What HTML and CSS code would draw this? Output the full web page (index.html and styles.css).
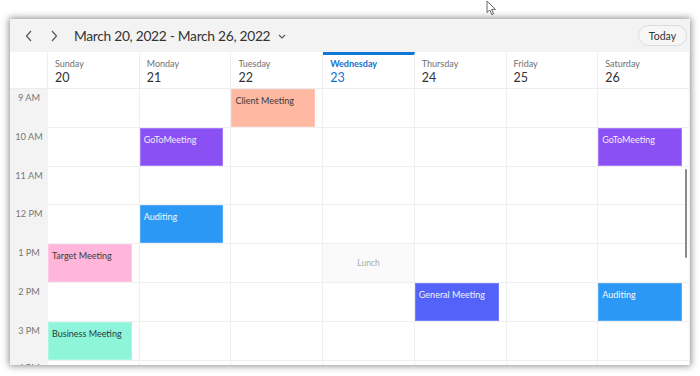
FILE: index.html
```html
<!DOCTYPE html>
<html>
<head>
<meta charset="utf-8">
<link rel="stylesheet" href="styles.css">
</head>
<body>
<svg class="cursor" width="12" height="16" viewBox="0 0 12 16"><path d="M1 1 L1 12.5 L3.8 10 L5.8 14.6 L7.6 13.8 L5.7 9.4 L9.4 9.4 Z" fill="#fff" stroke="#555" stroke-width="0.9" stroke-linejoin="round"/></svg>
<div class="window">
  <div class="toolbar">
    <div class="nav">
      <svg class="arrow" width="8" height="12" viewBox="0 0 8 12"><path d="M6 1 L1.5 6 L6 11" fill="none" stroke="#555" stroke-width="1.2"/></svg>
      <svg class="arrow" width="8" height="12" viewBox="0 0 8 12"><path d="M2 1 L6.5 6 L2 11" fill="none" stroke="#555" stroke-width="1.2"/></svg>
    </div>
    <div class="title">March 20, 2022 - March 26, 2022</div>
    <svg class="dropdown" width="8" height="5" viewBox="0 0 8 5"><path d="M1 1 L4 4 L7 1" fill="none" stroke="#555" stroke-width="1.1"/></svg>
    <div class="spacer"></div>
    <div class="today">Today</div>
  </div>
  <div class="days">
    <div class="dh corner"></div>
    <div class="dh"><span class="dn">Sunday</span><span class="dd">20</span></div>
    <div class="dh"><span class="dn">Monday</span><span class="dd">21</span></div>
    <div class="dh"><span class="dn">Tuesday</span><span class="dd">22</span></div>
    <div class="dh current"><span class="dn">Wednesday</span><span class="dd">23</span></div>
    <div class="dh"><span class="dn">Thursday</span><span class="dd">24</span></div>
    <div class="dh"><span class="dn">Friday</span><span class="dd">25</span></div>
    <div class="dh"><span class="dn">Saturday</span><span class="dd">26</span></div>
  </div>
  <div class="grid">
    <div class="tl">9 AM</div>
    <div class="c"></div><div class="c"></div><div class="c"><div class="ev salmon">Client Meeting</div></div><div class="c"></div><div class="c"></div><div class="c"></div><div class="c"></div>
    <div class="tl">10 AM</div>
    <div class="c"></div><div class="c"><div class="ev purple">GoToMeeting</div></div><div class="c"></div><div class="c"></div><div class="c"></div><div class="c"></div><div class="c"><div class="ev purple">GoToMeeting</div></div>
    <div class="tl">11 AM</div>
    <div class="c"></div><div class="c"></div><div class="c"></div><div class="c"></div><div class="c"></div><div class="c"></div><div class="c"></div>
    <div class="tl">12 PM</div>
    <div class="c"></div><div class="c"><div class="ev blue">Auditing</div></div><div class="c"></div><div class="c"></div><div class="c"></div><div class="c"></div><div class="c"></div>
    <div class="tl">1 PM</div>
    <div class="c"><div class="ev pink">Target Meeting</div></div><div class="c"></div><div class="c"></div><div class="c lunch">Lunch</div><div class="c"></div><div class="c"></div><div class="c"></div>
    <div class="tl">2 PM</div>
    <div class="c"></div><div class="c"></div><div class="c"></div><div class="c"></div><div class="c"><div class="ev indigo">General Meeting</div></div><div class="c"></div><div class="c"><div class="ev blue">Auditing</div></div>
    <div class="tl">3 PM</div>
    <div class="c"><div class="ev mint">Business Meeting</div></div><div class="c"></div><div class="c"></div><div class="c"></div><div class="c"></div><div class="c"></div><div class="c"></div>
    <div class="tl last">4 PM</div>
    <div class="c"></div><div class="c"></div><div class="c"></div><div class="c"></div><div class="c"></div><div class="c"></div><div class="c"></div>
  </div>
  <div class="scrollbar"></div>
</div>
</body>
</html>
```

FILE: styles.css
```css
html, body {
  margin: 0;
  padding: 0;
  background: #ffffff;
  font-family: Lato, "Open Sans", sans-serif;
}
body {
  position: relative;
  width: 700px;
  height: 376px;
  overflow: hidden;
  padding-top: 19px;
  padding-left: 10px;
  box-sizing: border-box;
}
.cursor {
  position: absolute;
  left: 486px;
  top: 0;
}
.window {
  position: relative;
  width: 680px;
  height: 346px;
  background: #ffffff;
  overflow: hidden;
  box-shadow: 0 0 7px 1px rgba(0, 0, 0, 0.45);
}
.toolbar {
  height: 33px;
  background: #f3f3f3;
  display: flex;
  align-items: center;
  padding: 0 3px 0 15px;
  box-sizing: border-box;
}
.nav {
  display: flex;
  gap: 17px;
  align-items: center;
}
.arrow {
  display: block;
}
.title {
  margin-left: 16px;
  font-size: 13.8px;
  letter-spacing: -0.3px;
  color: #333;
}
.dropdown {
  margin-left: 8px;
  margin-top: 2px;
}
.spacer {
  flex: 1;
}
.today {
  width: 49px;
  height: 21px;
  border: 1px solid #dcdcdc;
  border-radius: 11px;
  box-sizing: border-box;
  font-size: 10.5px;
  color: #333;
  display: flex;
  align-items: center;
  justify-content: center;
  background: #f6f6f6;
}
.days {
  display: grid;
  grid-template-columns: 38px repeat(7, minmax(0, 1fr));
  height: 37px;
}
.dh {
  border-top: 3px solid transparent;
  border-right: 1px solid #ededed;
  border-bottom: 1px solid #ededed;
  display: flex;
  flex-direction: column;
  padding-left: 7px;
  padding-top: 2px;
  box-sizing: border-box;
}
.dh.corner {
  padding: 0;
}
.dn {
  font-size: 9px;
  color: #707070;
  line-height: 13px;
}
.dd {
  font-size: 12.5px;
  color: #333;
  line-height: 16px;
}
.dh.current {
  border-top-color: #0f78d6;
}
.dh.current .dn {
  color: #1272d0;
  font-weight: 700;
}
.dh.current .dd {
  color: #1272d0;
}
.grid {
  display: grid;
  grid-template-columns: 38px repeat(7, minmax(0, 1fr));
  grid-auto-rows: 38.8px;
}
.tl {
  background: #f3f3f3;
  font-size: 9.2px;
  color: #777;
  text-align: center;
  padding-top: 2px;
  line-height: 13px;
}
.tl.last {
  padding-top: 0;
}
.c {
  border-right: 1px solid #efefef;
  border-bottom: 1px solid #efefef;
  box-sizing: border-box;
  display: flex;
  padding-right: 7px;
  min-width: 0;
}
.c.lunch {
  background: #fafafa;
  font-size: 8.5px;
  color: #aaaaaa;
  justify-content: center;
  align-items: center;
  padding-right: 0;
}
.ev {
  flex: 1;
  min-width: 0;
  font-size: 9px;
  line-height: 13px;
  padding: 4px 3px;
  box-sizing: border-box;
  border: 1px solid transparent;
  white-space: nowrap;
  overflow: hidden;
}
.salmon { background: #ffb8a2; color: #3a3a3a; border-color: #ffc4b1; }
.purple { background: #8a50f4; color: #f4efff; border-color: #a47cf7; }
.blue { background: #2b98f5; color: #f2f8ff; border-color: #53aef7; }
.pink { background: #ffb6da; color: #3a3a3a; border-color: #ffc6e2; }
.mint { background: #8ef5da; color: #2c3a36; border-color: #a8f7e2; }
.indigo { background: #5362f9; color: #f2f3ff; border-color: #7280fa; }
.scrollbar {
  position: absolute;
  left: 675px;
  top: 150px;
  width: 2px;
  height: 89px;
  border-radius: 1px;
  background: #8a8a8a;
}
```
